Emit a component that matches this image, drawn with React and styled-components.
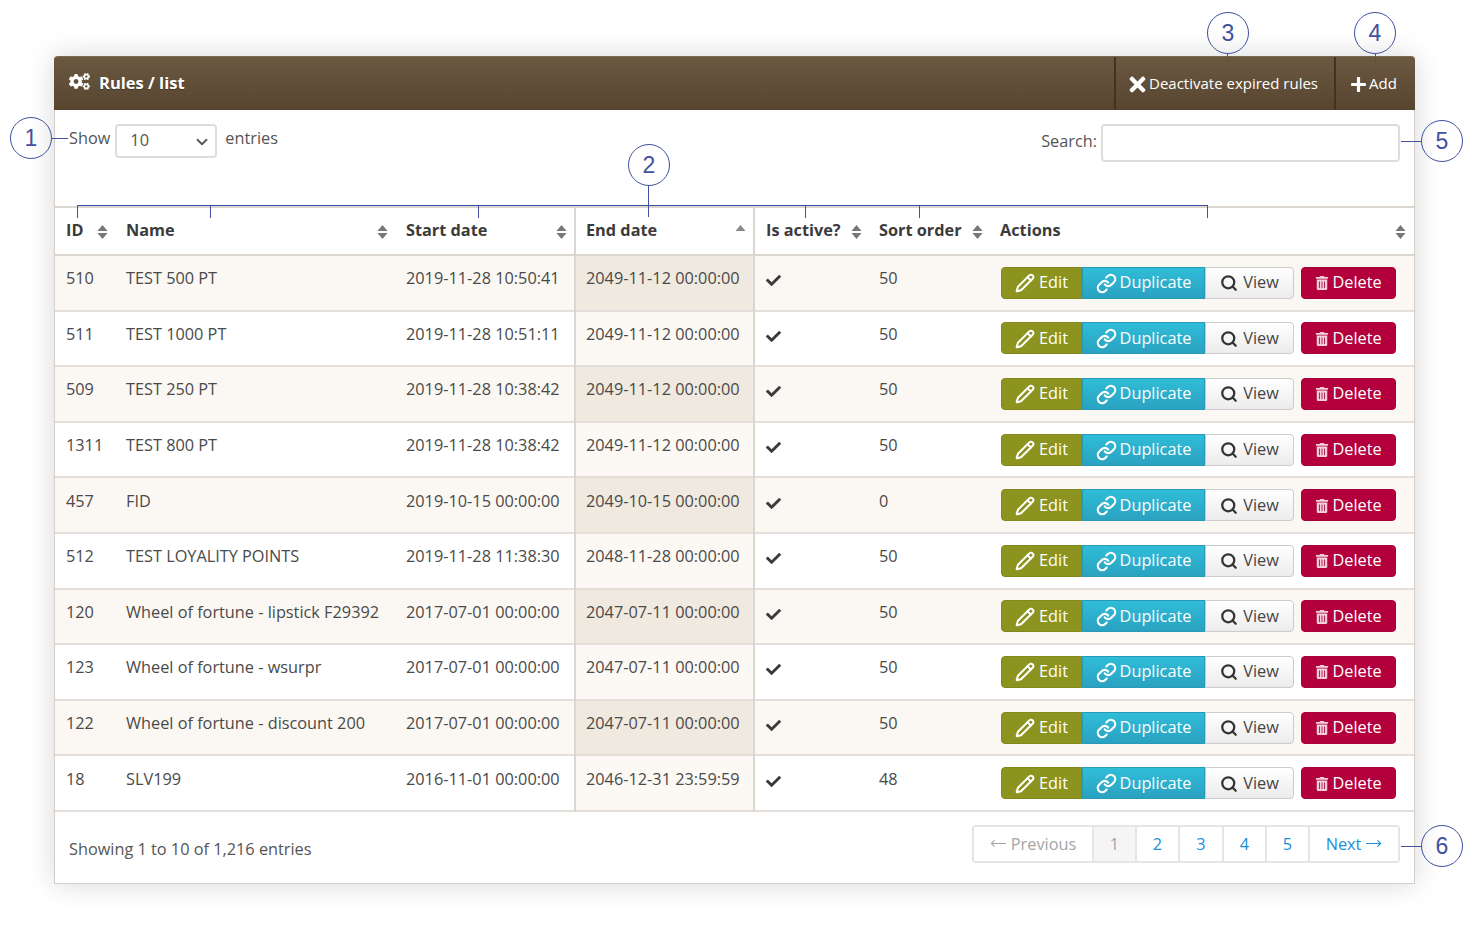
import React from 'react';
import styled, { createGlobalStyle } from 'styled-components';
import { FaCogs, FaTimes, FaPlus, FaTrashAlt, FaCheck } from 'react-icons/fa';
import { Pencil, ChevronDown, Link as LinkIcon, Search, MoveLeft, MoveRight } from 'lucide-react';

const Global = createGlobalStyle`
  html, body { margin: 0; padding: 0; background: #fff; }
  body { font-family: "Open Sans", "Liberation Sans", sans-serif; color: #444; }
`;

const Page = styled.div`
  position: relative;
  width: 1482px;
  height: 937px;
  padding: 56px 67px 0 54px;
  box-sizing: border-box;
  overflow: hidden;
`;

const Panel = styled.section`
  width: 1361px;
  height: 828px;
  box-sizing: border-box;
  border: 1px solid #d6cfc9;
  border-top: 0;
  border-radius: 4px 4px 0 0;
  background: #fff;
  box-shadow: 0 0 28px rgba(0, 0, 0, 0.16);
`;

const Header = styled.header`
  display: flex;
  align-items: stretch;
  height: 54px;
  margin: 0 -1px;
  border-radius: 4px 4px 0 0;
  border-top: 1px solid #7a6950;
  box-sizing: border-box;
  background: linear-gradient(#6a5841, #574530);
  color: #fff;
`;

const Title = styled.h1`
  flex: 1;
  display: flex;
  align-items: center;
  gap: 9px;
  margin: 0;
  padding: 0 0 3px 15px;
  font-size: 16.5px;
  font-weight: 700;
  text-shadow: 0 1px 1px rgba(0, 0, 0, 0.3);
  svg { font-size: 21px; margin-top: -2px; }
`;

const HeaderAction = styled.a`
  display: flex;
  align-items: center;
  gap: ${(p) => p.$gap}px;
  width: ${(p) => p.$width}px;
  box-sizing: border-box;
  padding: 0 0 1px ${(p) => p.$pad}px;
  border-left: 2px solid #40331f;
  font-size: 15px;
  color: #fff;
  svg { font-size: ${(p) => p.$icon}px; margin-top: 2px; }
`;

const Toolbar = styled.div`
  display: flex;
  justify-content: space-between;
  align-items: flex-start;
  height: 96px;
  padding: 14px 14px 0 14px;
  box-sizing: border-box;
`;

const LengthLabel = styled.label`
  display: flex;
  align-items: flex-start;
  gap: 5px;
  font-size: 16.3px;
  line-height: 28px;
  color: #555;
`;

const FakeSelect = styled.div`
  display: flex;
  align-items: center;
  justify-content: space-between;
  width: 102px;
  height: 34px;
  margin-right: 3px;
  padding: 0 4px 2px 13px;
  box-sizing: border-box;
  border: 2px solid #ddd;
  border-radius: 4px;
  font-size: 16.3px;
  color: #555;
  svg { margin-top: 4px; }
`;

const SearchLabel = styled.label`
  display: flex;
  align-items: flex-start;
  gap: 4px;
  font-size: 16.3px;
  line-height: 34px;
  color: #555;
`;

const SearchInput = styled.input`
  width: 299px;
  height: 38px;
  box-sizing: border-box;
  border: 2px solid #ddd;
  border-radius: 4px;
  background: #fff;
  outline: none;
`;

const Table = styled.table`
  width: 100%;
  table-layout: fixed;
  border-collapse: collapse;
  border-spacing: 0;
  font-size: 16.3px;
`;

const HeadCell = styled.th`
  position: relative;
  height: 48px;
  padding: 0 11px 2px;
  box-sizing: border-box;
  text-align: left;
  font-size: 16.3px;
  font-weight: 700;
  color: #3b3b3b;
  background: #fff;
  border-top: 2px solid #dcd6d1;
  border-bottom: 2px solid #dcd6d1;
  ${(p) => p.$sorted && 'padding-left: 10px; border-left: 2px solid #dcd6d1; border-right: 2px solid #dcd6d1;'}
`;

const SortMark = styled.svg`
  position: absolute;
  right: ${(p) => p.$right}px;
  top: 15px;
  width: 11px;
  height: 18px;
  fill: #777;
`;

const Row = styled.tr`
  height: 55.6px;
  background: ${(p) => (p.$odd ? '#fbf8f3' : '#fff')};
  border-bottom: 2px solid #e4dfda;
`;

const Cell = styled.td`
  padding: 0 11px 9px;
  box-sizing: border-box;
  color: #4a4a4a;
  white-space: nowrap;
  vertical-align: middle;
  ${(p) => p.$sorted && `
    padding-left: 10px;
    background: ${p.$odd ? '#f0e9df' : '#fcf9f4'};
    border-left: 2px solid #dcd6d1;
    border-right: 2px solid #dcd6d1;
  `}
`;

const CheckCell = styled(Cell)`
  padding-bottom: 4px;
  font-size: 15px;
  color: #3b3b3b;
  svg { display: block; }
`;

const ActionCell = styled.td`
  padding: 0 11px 0 12px;
  box-sizing: border-box;
`;

const ActionWrap = styled.div`
  display: flex;
  align-items: center;
`;

const ButtonGroup = styled.div`
  display: flex;
  margin-right: 7px;
`;

const Btn = styled.a`
  display: flex;
  align-items: center;
  justify-content: center;
  gap: ${(p) => p.$gap}px;
  width: ${(p) => p.$width}px;
  height: 32px;
  padding-bottom: 1px;
  box-sizing: border-box;
  font-size: 16.3px;
  color: ${(p) => p.$fg};
  background: ${(p) => p.$bg};
  border: 1px solid ${(p) => p.$line};
  border-radius: ${(p) => p.$radius};
  svg { flex: none; margin-top: 2px; }
`;

const Footer = styled.div`
  display: flex;
  justify-content: space-between;
  align-items: flex-start;
  height: 71px;
  padding: 13px 14px 0;
  box-sizing: border-box;
  font-size: 16.3px;
  color: #555;
`;

const Info = styled.span`
  padding-top: 13px;
`;

const Pager = styled.nav`
  display: flex;
  height: 38px;
  box-sizing: border-box;
  border: 2px solid #e5e5e5;
  border-radius: 4px;
`;

const PageLink = styled.a`
  display: flex;
  align-items: center;
  justify-content: center;
  gap: 4px;
  width: ${(p) => p.$width}px;
  box-sizing: border-box;
  font-size: 16.3px;
  color: ${(p) => (p.$muted ? '#a5a5a5' : '#1c8fd6')};
  background: ${(p) => (p.$current ? '#f5f5f5' : '#fff')};
  border-left: ${(p) => (p.$first ? '0' : '2px solid #e5e5e5')};
`;

const Callout = styled.div`
  position: absolute;
  left: ${(p) => p.$x - 21}px;
  top: ${(p) => p.$y - 21}px;
  width: 42px;
  height: 42px;
  box-sizing: border-box;
  display: flex;
  align-items: center;
  justify-content: center;
  border: 1px solid #3f51a0;
  border-radius: 50%;
  font-family: "Liberation Sans", Arial, sans-serif;
  font-size: 23px;
  color: #3f51a0;
`;

const HLine = styled.i`
  position: absolute;
  left: ${(p) => p.$x}px;
  top: ${(p) => p.$y}px;
  width: ${(p) => p.$len}px;
  height: 1px;
  background: #3f51a0;
`;

const VLine = styled.i`
  position: absolute;
  left: ${(p) => p.$x}px;
  top: ${(p) => p.$y}px;
  width: 1px;
  height: ${(p) => p.$len}px;
  background: #3f51a0;
`;

const rows = [
  ['510', 'TEST 500 PT', '2019-11-28 10:50:41', '2049-11-12 00:00:00', '50'],
  ['511', 'TEST 1000 PT', '2019-11-28 10:51:11', '2049-11-12 00:00:00', '50'],
  ['509', 'TEST 250 PT', '2019-11-28 10:38:42', '2049-11-12 00:00:00', '50'],
  ['1311', 'TEST 800 PT', '2019-11-28 10:38:42', '2049-11-12 00:00:00', '50'],
  ['457', 'FID', '2019-10-15 00:00:00', '2049-10-15 00:00:00', '0'],
  ['512', 'TEST LOYALITY POINTS', '2019-11-28 11:38:30', '2048-11-28 00:00:00', '50'],
  ['120', 'Wheel of fortune - lipstick F29392', '2017-07-01 00:00:00', '2047-07-11 00:00:00', '50'],
  ['123', 'Wheel of fortune - wsurpr', '2017-07-01 00:00:00', '2047-07-11 00:00:00', '50'],
  ['122', 'Wheel of fortune - discount 200', '2017-07-01 00:00:00', '2047-07-11 00:00:00', '50'],
  ['18', 'SLV199', '2016-11-01 00:00:00', '2046-12-31 23:59:59', '48'],
];

const columns = [
  { label: 'ID', width: 60, right: 7 },
  { label: 'Name', width: 280, right: 7 },
  { label: 'Start date', width: 180, right: 7 },
  { label: 'End date', width: 179, right: 7, sorted: true },
  { label: 'Is active?', width: 114, right: 6 },
  { label: 'Sort order', width: 121, right: 6 },
  { label: 'Actions', width: 425, right: 8 },
];

function Sort({ right, asc }) {
  return (
    <SortMark $right={right} viewBox="0 0 11 18">
      <path d="M5.5 2 L10.5 8 H0.5 Z" fill={asc ? '#888' : '#777'} />
      {!asc && <path d="M0.5 10 H10.5 L5.5 16 Z" />}
    </SortMark>
  );
}

function Actions() {
  return (
    <ActionWrap>
      <ButtonGroup>
        <Btn $width={81} $gap={4} $fg="#fff" $bg="#8c931f" $line="#82881c" $radius="4px 0 0 4px">
          <Pencil size={20} strokeWidth={2.4} color="#fff" />Edit
        </Btn>
        <Btn $width={123} $gap={3} $fg="#fff" $bg="linear-gradient(#2fbdd8, #2aa2c0)" $line="#269ab8" $radius="0">
          <LinkIcon size={21} strokeWidth={2.5} />Duplicate
        </Btn>
        <Btn $width={89} $gap={5} $fg="#444" $bg="linear-gradient(#fff, #ececec)" $line="#ccc" $radius="0 4px 4px 0">
          <Search size={18} strokeWidth={3} color="#333" />View
        </Btn>
      </ButtonGroup>
      <Btn $width={95} $gap={3} $fg="#fff" $bg="#b3003c" $line="#a80038" $radius="4px">
        <FaTrashAlt size={14} color="#f3d0da" />Delete
      </Btn>
    </ActionWrap>
  );
}

export default function App() {
  return (
    <Page>
      <Global />
      <Panel>
        <Header>
          <Title><FaCogs />Rules / list</Title>
          <HeaderAction $width={220} $pad={10} $gap={0} $icon={23}><FaTimes />Deactivate expired rules</HeaderAction>
          <HeaderAction $width={81} $pad={14} $gap={2} $icon={17}><FaPlus />Add</HeaderAction>
        </Header>
        <Toolbar>
          <LengthLabel>
            Show
            <FakeSelect>10<ChevronDown size={18} strokeWidth={2.4} color="#555" /></FakeSelect>
            entries
          </LengthLabel>
          <SearchLabel>Search:<SearchInput /></SearchLabel>
        </Toolbar>
        <Table>
          <colgroup>
            {columns.map((c) => <col key={c.label} style={{ width: c.width }} />)}
          </colgroup>
          <thead>
            <tr>
              {columns.map((c) => (
                <HeadCell key={c.label} $sorted={c.sorted}>
                  {c.label}
                  <Sort right={c.right} asc={c.sorted} />
                </HeadCell>
              ))}
            </tr>
          </thead>
          <tbody>
            {rows.map((r, i) => {
              const odd = i % 2 === 0;
              return (
                <Row key={r[0]} $odd={odd}>
                  <Cell>{r[0]}</Cell>
                  <Cell>{r[1]}</Cell>
                  <Cell>{r[2]}</Cell>
                  <Cell $sorted $odd={odd}>{r[3]}</Cell>
                  <CheckCell><FaCheck /></CheckCell>
                  <Cell>{r[4]}</Cell>
                  <ActionCell><Actions /></ActionCell>
                </Row>
              );
            })}
          </tbody>
        </Table>
        <Footer>
          <Info>Showing 1 to 10 of 1,216 entries</Info>
          <Pager>
            <PageLink $first $muted $width={118}><MoveLeft size={17} strokeWidth={1.5} />Previous</PageLink>
            <PageLink $current $muted $width={43}>1</PageLink>
            <PageLink $width={43}>2</PageLink>
            <PageLink $width={44}>3</PageLink>
            <PageLink $width={43}>4</PageLink>
            <PageLink $width={43}>5</PageLink>
            <PageLink $width={90}>Next<MoveRight size={17} strokeWidth={1.5} /></PageLink>
          </Pager>
        </Footer>
      </Panel>

      <Callout $x={31} $y={138}>1</Callout>
      <HLine $x={52} $y={138} $len={16} />
      <Callout $x={649} $y={165}>2</Callout>
      <VLine $x={648} $y={186} $len={31} />
      <Callout $x={1228} $y={33}>3</Callout>
      <VLine $x={1227} $y={54} $len={20} />
      <Callout $x={1375} $y={33}>4</Callout>
      <VLine $x={1375} $y={54} $len={20} />
      <Callout $x={1442} $y={141}>5</Callout>
      <HLine $x={1401} $y={141} $len={20} />
      <Callout $x={1442} $y={846}>6</Callout>
      <HLine $x={1401} $y={846} $len={20} />
      <HLine $x={77} $y={205} $len={1131} />
      {[77, 210, 478, 805, 919, 1207].map((x) => <VLine key={x} $x={x} $y={205} $len={13} />)}
    </Page>
  );
}
